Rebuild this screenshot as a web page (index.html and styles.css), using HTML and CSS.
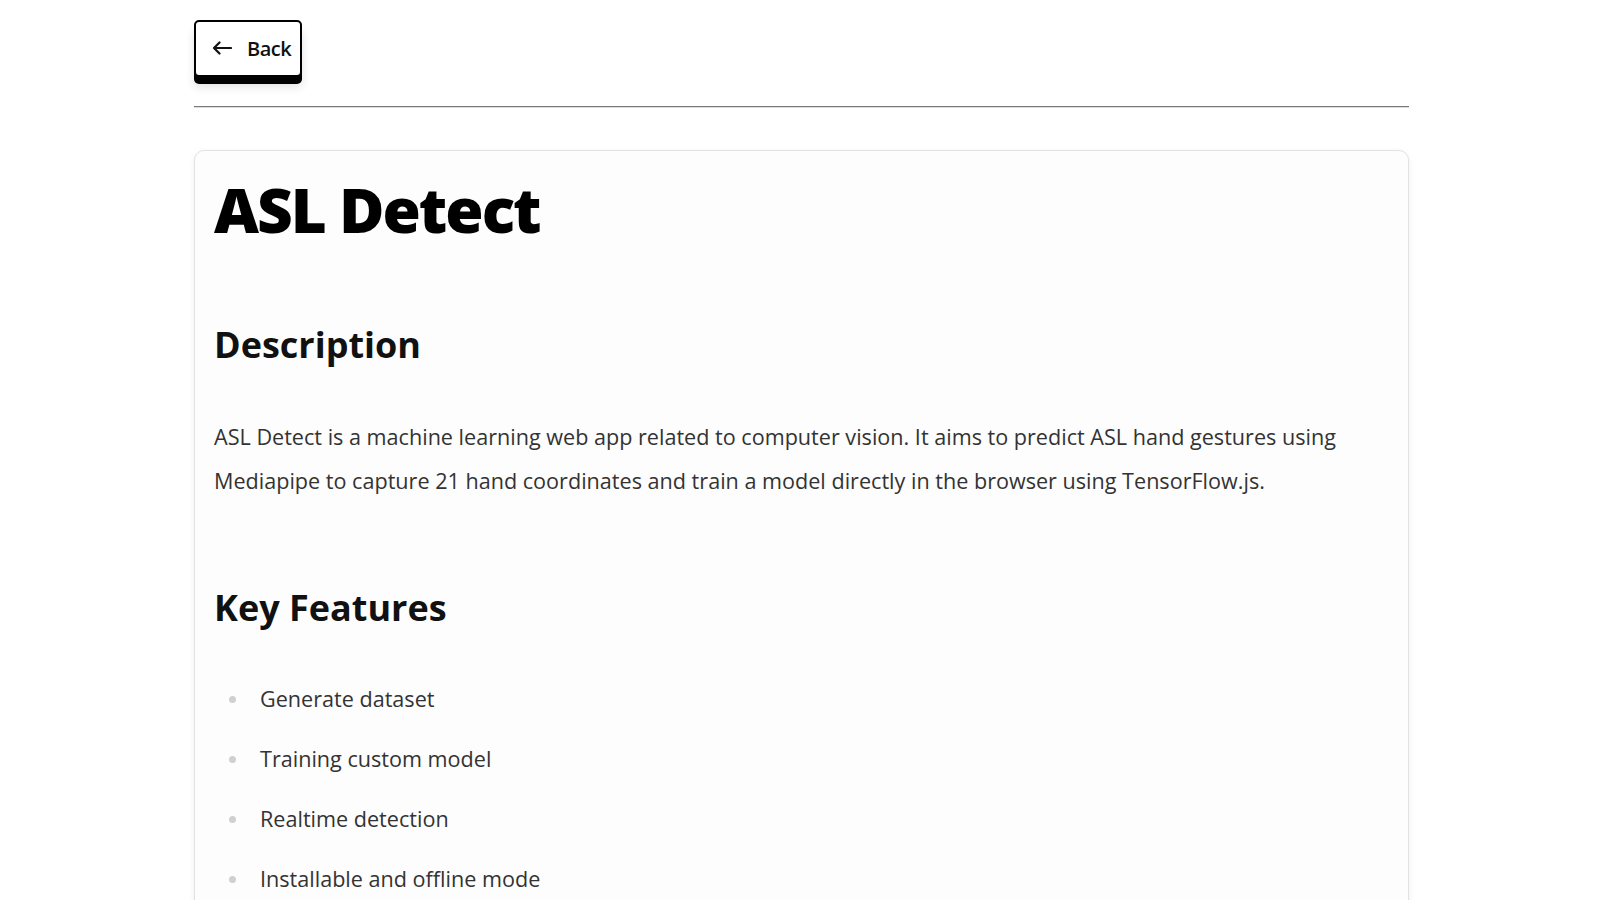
FILE: index.html
```html
<!DOCTYPE html>
<html lang="en">
<head>
  <meta charset="UTF-8" />
  <meta name="viewport" content="width=device-width, initial-scale=1.0"/>
  <title>ASL Detect</title>
  <link rel="stylesheet" href="styles.css">
</head>
<body>
  <div class="page">
    <header class="top-bar">
      <button class="back-button">
        <svg class="back-icon" width="20" height="14" viewBox="0 0 20 14" fill="none" stroke="currentColor" stroke-width="2.2" stroke-linecap="round" stroke-linejoin="round">
          <path d="M19 7H2M7.5 1.5L2 7l5.5 5.5"/>
        </svg>
        <span>Back</span>
      </button>
    </header>

    <article class="project-card">
      <h1 class="project-title">ASL Detect</h1>

      <h2 class="section-title">Description</h2>
      <p class="section-text">ASL Detect is a machine learning web app related to computer vision. It aims to predict ASL hand gestures using Mediapipe to capture 21 hand coordinates and train a model directly in the browser using TensorFlow.js.</p>

      <h2 class="section-title section-title-features">Key Features</h2>
      <ul class="feature-list">
        <li>Generate dataset</li>
        <li>Training custom model</li>
        <li>Realtime detection</li>
        <li>Installable and offline mode</li>
      </ul>
    </article>
  </div>
</body>
</html>
```
FILE: styles.css
```css
body {
  margin: 0;
  background-color: #fff;
  color: #111;
  font-family: 'Open Sans', sans-serif;
}

.page {
  width: 1215px;
  margin: 0 auto;
  padding-left: 3px;
}

.top-bar {
  padding: 20px 0 29px;
  border-bottom: 1px solid #7a7a7a;
  box-shadow: 0 1px 0 #dcdcdc;
}

.back-button {
  display: flex;
  align-items: center;
  gap: 15px;
  height: 57px;
  padding: 0 9px 0 16px;
  background: #fff;
  color: #111;
  border: 2px solid #000;
  border-radius: 5px;
  box-shadow: 0 7px 0 #000, 0 10px 10px rgba(0, 0, 0, 0.12);
  font-family: 'Open Sans', sans-serif;
  font-size: 20px;
  font-weight: 600;
  cursor: pointer;
}

.back-icon {
  display: block;
  margin-top: -1px;
}

.back-button span {
  letter-spacing: -0.5px;
}

.project-card {
  margin-top: 43px;
  padding: 21px 20px 40px 19px;
  background-color: #fdfdfd;
  border: 1px solid #e2e2e2;
  border-radius: 10px;
  box-shadow: 0 2px 6px rgba(0, 0, 0, 0.07);
}

.project-title {
  margin: 0;
  font-size: 62px;
  font-weight: 800;
  line-height: 74px;
  letter-spacing: -2px;
  color: #000;
}

.section-title {
  margin: 77px 0 0;
  font-size: 36px;
  font-weight: 700;
  line-height: 43px;
  color: #111;
}

.section-title-features {
  margin-top: 83px;
}

.section-text {
  margin: 49px 0 0;
  font-size: 21.6px;
  line-height: 44px;
  color: #333;
}

.feature-list {
  list-style: none;
  margin: 48px 0 0;
  padding: 0;
}

.feature-list li {
  display: flex;
  align-items: center;
  gap: 24px;
  margin-bottom: 16px;
  font-size: 21.6px;
  line-height: 44px;
  color: #333;
}

.feature-list li::before {
  content: '';
  width: 7px;
  height: 7px;
  margin-left: 15px;
  border-radius: 50%;
  background-color: #d0d0d0;
}
```
